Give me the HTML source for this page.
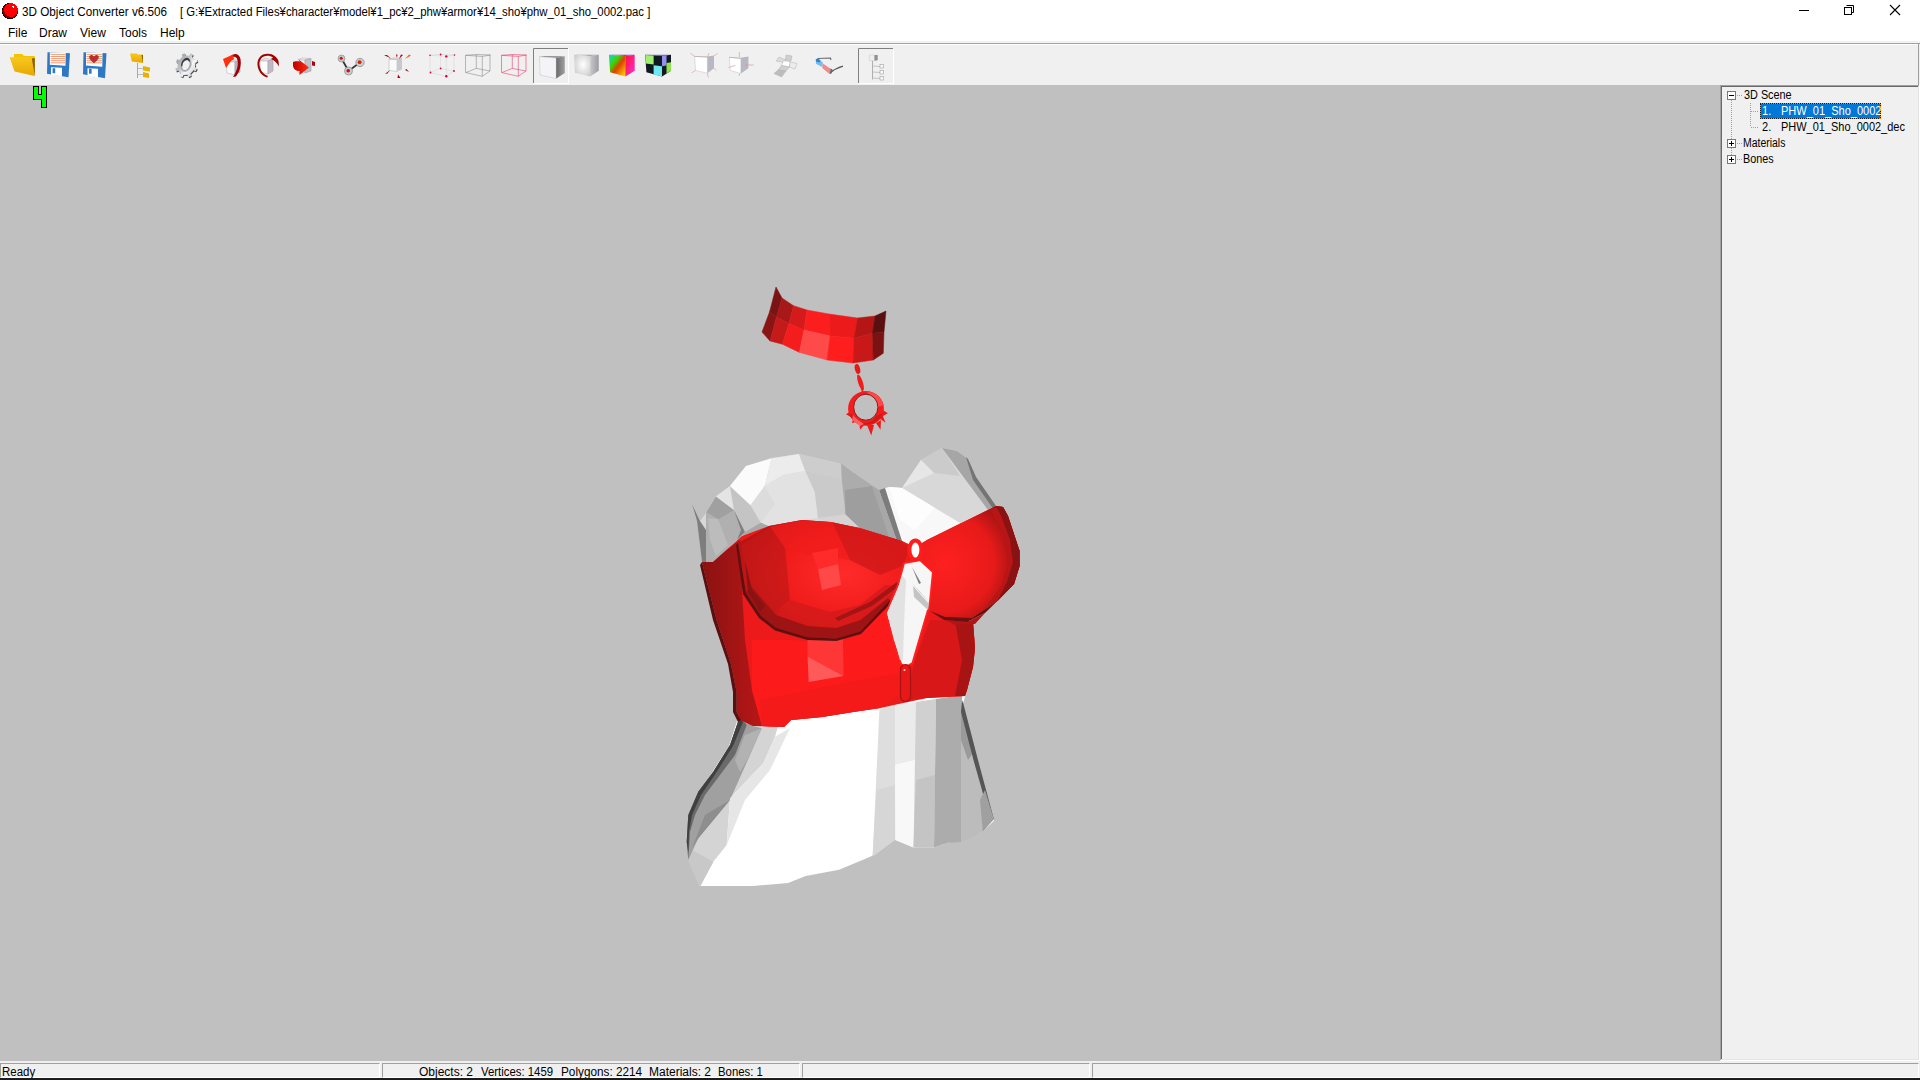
<!DOCTYPE html>
<html><head><meta charset="utf-8">
<style>
*{margin:0;padding:0;box-sizing:border-box}
html,body{width:1920px;height:1080px;overflow:hidden;background:#fff;font-family:"Liberation Sans",sans-serif;font-size:12px;color:#000}
.a{position:absolute}
.t{position:absolute;white-space:nowrap;line-height:1}
#title{left:0;top:0;width:1920px;height:43px;background:#fff}
#tb{left:0;top:43px;width:1920px;height:43px;background:#f0f0f0;border-top:1px solid #a0a0a0}
#vp{left:0;top:85px;width:1720px;height:976px;background:#c0c0c0}
#tree{left:1720px;top:85px;width:200px;height:976px;background:#f0f0f0}
#sb{left:0;top:1061px;width:1920px;height:19px;background:#f0f0f0}
.sp{position:absolute;top:2px;height:15px;border-top:1px solid #a0a0a0;border-left:1px solid #a0a0a0;border-right:1px solid #fff;border-bottom:1px solid #fff;background:#f0f0f0}
.tt{position:absolute;white-space:nowrap;font-size:12px;line-height:1;transform-origin:0 0}
</style></head>
<body>
<div id="title" class="a">
  <svg class="a" style="left:0;top:0" width="24" height="22" shape-rendering="crispEdges">
    <circle cx="10" cy="11" r="8.2" fill="#000"/>
    <circle cx="10" cy="11" r="7.6" fill="#880000"/>
    <circle cx="11" cy="10" r="6.8" fill="#ff0000"/>
    <path d="M12 6 H14 V8 H13 V7 H12 Z" fill="#fff"/>
  </svg>
  <div class="t" style="left:22px;top:6px;font-size:12px;transform:scaleX(0.975);transform-origin:0 0">3D Object Converter v6.506</div>
  <div class="t" style="left:180px;top:6px;font-size:12px;transform:scaleX(0.945);transform-origin:0 0">[ G:¥Extracted Files¥character¥model¥1_pc¥2_phw¥armor¥14_sho¥phw_01_sho_0002.pac ]</div>
  <svg class="a" style="left:1790px;top:0" width="130" height="22">
    <rect x="9" y="10" width="10" height="1" fill="#000"/>
    <rect x="54.5" y="7.5" width="7" height="7" fill="none" stroke="#000"/>
    <path d="M56.5 5.5 H63.5 V12.5 H61.5" fill="none" stroke="#000"/>
    <path d="M100 5 L110 15 M110 5 L100 15" stroke="#000" stroke-width="1.1"/>
  </svg>
  <div class="t" style="left:8px;top:27px">File</div>
  <div class="t" style="left:39px;top:27px">Draw</div>
  <div class="t" style="left:80px;top:27px">View</div>
  <div class="t" style="left:119px;top:27px">Tools</div>
  <div class="t" style="left:160px;top:27px">Help</div>
</div>
<div class="a" style="left:0;top:41px;width:1920px;height:1px;background:#f0f0f0"></div><div class="a" style="left:0;top:42px;width:1920px;height:1px;background:#f5f5f5"></div>
<div id="tb" class="a">
  <div class="a" style="left:0;top:0;width:1919px;height:1px;background:#fff"></div>
  <div class="a" style="left:1918px;top:0;width:1px;height:42px;background:#a0a0a0"></div>
  <div class="a" style="left:0;top:41px;width:1919px;height:1px;background:#696969"></div>
  <svg class="a" style="left:0;top:-43px" width="900" height="86">
 <defs>
  <linearGradient id="fy" x1="0" y1="0" x2="0" y2="1"><stop offset="0" stop-color="#f8c820"/><stop offset="1" stop-color="#e6a800"/></linearGradient>
  <linearGradient id="gry" x1="0" y1="0" x2="1" y2="1"><stop offset="0" stop-color="#e8e8e8"/><stop offset="0.5" stop-color="#a8a8a8"/><stop offset="1" stop-color="#707070"/></linearGradient>
  <linearGradient id="rar" x1="0" y1="0" x2="1" y2="0"><stop offset="0" stop-color="#c00000"/><stop offset="1" stop-color="#ff3010"/></linearGradient>
  <linearGradient id="sideg" x1="0" y1="0" x2="1" y2="0"><stop offset="0" stop-color="#6a6a6a"/><stop offset="1" stop-color="#a0a0a0"/></linearGradient>
  <linearGradient id="sideg2" x1="0" y1="0" x2="1" y2="0"><stop offset="0" stop-color="#c8c8cc"/><stop offset="1" stop-color="#9a9aa0"/></linearGradient>
  <radialGradient id="smf" cx="0.55" cy="0.45" r="0.7"><stop offset="0" stop-color="#ffffff"/><stop offset="1" stop-color="#c8c8c8"/></radialGradient>
  <linearGradient id="cc1" x1="0" y1="0" x2="1" y2="1"><stop offset="0" stop-color="#00e0d0"/><stop offset="0.35" stop-color="#40d000"/><stop offset="0.55" stop-color="#e04000"/><stop offset="1" stop-color="#ffe000"/></linearGradient>
  <linearGradient id="cc0" x1="0" y1="1" x2="0" y2="0"><stop offset="0" stop-color="#00ff20"/><stop offset="1" stop-color="#00e0c0" stop-opacity="0"/></linearGradient>
  <linearGradient id="cc2" x1="0" y1="0" x2="1" y2="1"><stop offset="0" stop-color="#ff1040"/><stop offset="1" stop-color="#ff30d0"/></linearGradient>
 </defs>
 <!-- folder -->
 <path d="M14 53 H22.5 L23.8 55 H34.8 V75 L31.8 57.6 H14 Z" fill="#f5c400"/>
 <path d="M9.6 56.2 H31.8 L34.8 75 L14.6 70.4 Z" fill="url(#fy)"/>
 <path d="M31.8 57.6 L34.8 75 V57 Z" fill="#8a6000"/>
 <!-- floppy 1 --><g transform="translate(0 -0.8)">
 <path d="M47.5 52 L70 53 L68.5 77 L47 73.5 Z" fill="#2f78c4"/>
 <path d="M49.8 52.3 H65.7 L65.5 65.5 L49.8 64.6 Z" fill="#fff"/>
 <g stroke="#f08050" stroke-width="0.8"><path d="M50.5 54.2 H65"/><path d="M50.5 56.3 H65"/><path d="M50.5 58.4 H65"/><path d="M50.5 60.5 H65"/><path d="M50.5 62.6 H65"/></g>
 <path d="M51 67 L62 67.6 L62 76 L51 74.8 Z" fill="#fff"/>
 <rect x="52.6" y="68" width="2.6" height="5" fill="#2f78c4"/>
 <!-- floppy 2 -->
 <path d="M83.5 52 L106.5 53 L105 78 L83 74 Z" fill="#2f78c4"/>
 <path d="M86 52.3 H102.5 L102.3 66.5 L86 65.3 Z" fill="#fff"/>
 <g stroke="#f08050" stroke-width="0.8"><path d="M86.5 54.2 H102"/><path d="M86.5 56.3 H102"/><path d="M86.5 58.4 H102"/><path d="M86.5 60.5 H102"/><path d="M86.5 62.6 H102"/></g>
 <path d="M94 63 C90 60 88.5 57.5 89.5 55.8 C90.5 54.2 93 54.5 94 56.3 C95 54.5 97.5 54.2 98.5 55.8 C99.5 57.5 98 60 94 63 Z" fill="#b83030"/>
 <path d="M87.5 68 L98 68.6 L98 77 L87.5 75.8 Z" fill="#fff"/>
 <rect x="89" y="68.5" width="2.6" height="5" fill="#2f78c4"/>
 </g><!-- tree icon -->
 <path d="M130 52.5 H137 L138 53.5 H143 V62 L131.8 60.5 Z" fill="url(#fy)"/>
 <path d="M141.5 54 L143 54 V62 Z" fill="#8a6000"/>
 <rect x="137" y="62" width="0.9" height="15" fill="#a0a0a0"/>
 <path d="M138 67.5 H143 M138 73.5 H143" stroke="#b0b0b0" stroke-width="0.8"/>
 <path d="M143 65 L150 66.5 L149.8 70.5 L143 69.5 Z" fill="#e8b000"/>
 <path d="M143 71 L149 72.5 L149 77 L143 76 Z" fill="#e8b000"/>
 <!-- gear -->
 <defs><linearGradient id="gch" x1="0" y1="0" x2="1" y2="0.3"><stop offset="0" stop-color="#98989c"/><stop offset="0.45" stop-color="#bfc3c7"/><stop offset="0.75" stop-color="#f4f8fa"/><stop offset="1" stop-color="#d8dcdf"/></linearGradient></defs>
 <g transform="translate(186.5 64.2) rotate(25) scale(0.9 1.04)">
  <path d="M8.87 -3.67 L9.46 -1.65 L12.10 -1.53 L12.10 1.53 L9.46 1.65 L8.87 3.67 L7.85 5.52 L9.64 7.48 L7.48 9.64 L5.52 7.85 L3.67 8.87 L1.65 9.46 L1.53 12.10 L-1.53 12.10 L-1.65 9.46 L-3.67 8.87 L-5.52 7.85 L-7.48 9.64 L-9.64 7.48 L-7.85 5.52 L-8.87 3.67 L-9.46 1.65 L-12.10 1.53 L-12.10 -1.53 L-9.46 -1.65 L-8.87 -3.67 L-7.85 -5.52 L-9.64 -7.48 L-7.48 -9.64 L-5.52 -7.85 L-3.67 -8.87 L-1.65 -9.46 L-1.53 -12.10 L1.53 -12.10 L1.65 -9.46 L3.67 -8.87 L5.52 -7.85 L7.48 -9.64 L9.64 -7.48 L7.85 -5.52 Z" fill="#4a4a4a" transform="translate(1.2 0.6)"/>
  <path d="M8.87 -3.67 L9.46 -1.65 L12.10 -1.53 L12.10 1.53 L9.46 1.65 L8.87 3.67 L7.85 5.52 L9.64 7.48 L7.48 9.64 L5.52 7.85 L3.67 8.87 L1.65 9.46 L1.53 12.10 L-1.53 12.10 L-1.65 9.46 L-3.67 8.87 L-5.52 7.85 L-7.48 9.64 L-9.64 7.48 L-7.85 5.52 L-8.87 3.67 L-9.46 1.65 L-12.10 1.53 L-12.10 -1.53 L-9.46 -1.65 L-8.87 -3.67 L-7.85 -5.52 L-9.64 -7.48 L-7.48 -9.64 L-5.52 -7.85 L-3.67 -8.87 L-1.65 -9.46 L-1.53 -12.10 L1.53 -12.10 L1.65 -9.46 L3.67 -8.87 L5.52 -7.85 L7.48 -9.64 L9.64 -7.48 L7.85 -5.52 Z" fill="url(#gch)"/>
  <ellipse cx="-0.8" cy="0" rx="6.2" ry="7" fill="#b8b8bc"/><ellipse cx="-0.6" cy="0.2" rx="4.3" ry="5.4" fill="#f0f0f0" stroke="#8c8c8c" stroke-width="0.7"/>
  <path d="M-4.9 3 A4.3 5.4 0 0 1 1.5 -5.3 L1.2 -3.6 A3.2 4.2 0 0 0 -3.6 2.6 Z" fill="#3a3a3a"/>
 </g>
 <!-- rotate 1 -->
 <path d="M226 61 L231 58.5 L240 59.5 L235 61 Z" fill="#e8e0e4" stroke="#b0a8b0" stroke-width="0.6"/>
 <path d="M226 61 L235 61 V74 L227 72 Z" fill="#fafafa" stroke="#b8b8b8" stroke-width="0.6"/>
 <path d="M235 61 L240 59.5 V71 L235 74 Z" fill="#b8b4c0" stroke="#a0a0a8" stroke-width="0.6"/>
 <path d="M231 55 C234 52 239 52 240.5 58 C241.5 64 240 70 236 75.5 L233 76 C237 70 238.5 64 237.5 59 C236.5 55 233 55 231 57 Z" fill="#a00000"/>
 <path d="M223 58 L233 53.5 L234 58 L231 60 L226 67 Z" fill="#ff3010"/>
 <!-- rotate 2 -->
 <path d="M260 60 L265 57.5 L273 58.5 L268 60 Z" fill="#f0e4e8" stroke="#c0b0b8" stroke-width="0.6"/>
 <path d="M260 60 L268 60 V73 L260.5 71 Z" fill="#fcfcfc" stroke="#b8b8b8" stroke-width="0.6"/>
 <path d="M268 60 L273 58.5 V70 L268 73 Z" fill="#c0b8c4" stroke="#a8a0a8" stroke-width="0.6"/>
 <path d="M266 53 C260 53 257 59 257.5 64 C258 70 262 75 267 76.5 L268 75 C263 73 260 69 259.5 64 C259 59 262 55 266 55 Z" fill="#a00000"/>
 <path d="M266 53 C272 52 277 56 278.5 60 L279 65.5 C277 62 274 59 271 58 L273 56.5 C271 55 268 54.5 266 55 Z" fill="#a00000"/>
 <!-- move -->
 <path d="M298 58.5 L305 59 V72 L298 71.5 Z" fill="#fafafa" stroke="#b8b8b8" stroke-width="0.6"/>
 <path d="M298 58.5 L302 57 L311 57.5 L305 59 Z" fill="#f0f0f0" stroke="#b8b8b8" stroke-width="0.6"/>
 <path d="M305 59 L311 57.5 V70 L305 72 Z" fill="#c0c0c8" stroke="#a0a0a8" stroke-width="0.6"/>
 <path d="M312 60 L315 61 V65 L312 64.5 Z" fill="#b00010"/>
 <path d="M293 61 C294 60 298 60 299.5 60.5 L299 58.7 L309 66.5 L299.5 74 L299.5 70 C296 70 293.5 68 293 65 Z" fill="url(#rar)"/>
 <!-- vertices -->
 <path d="M341.5 57.5 L348.5 70 L360 61.5" stroke="#383838" stroke-width="1.8" fill="none"/>
 <circle cx="341.5" cy="57.5" r="3.4" fill="#c8ccd0" stroke="#8a8a8a" stroke-width="0.7"/><circle cx="341.2" cy="57.2" r="1.5" fill="#d01000"/>
 <circle cx="348.5" cy="70" r="4" fill="#c8ccd0" stroke="#8a8a8a" stroke-width="0.7"/><circle cx="348.2" cy="69.8" r="1.8" fill="#d01000"/>
 <circle cx="360" cy="61.5" r="4.2" fill="#c8ccd0" stroke="#8a8a8a" stroke-width="0.7"/><circle cx="359.6" cy="61.2" r="1.9" fill="#e02000"/>
 <!-- scale cube -->
 <path d="M389 58 L397 58.5 V70.5 L389 69.5 Z" fill="#fafafa" stroke="#b8b8b8" stroke-width="0.6"/>
 <path d="M389 58 L394 57 L402 57.5 L397 58.5 Z" fill="#e8e8e8" stroke="#b8b8b8" stroke-width="0.6"/>
 <path d="M397 58.5 L402 57.5 V68.5 L397 70.5 Z" fill="#c8c8d0"/>
 <g fill="#b00010"><path d="M384 54 L387 54 L391 57.5 Z"/><path d="M396 53.5 L397.5 53.5 L397 57 Z"/><path d="M401 53.5 L403 54 L399 58 Z"/><path d="M385 73 L390 69 L387.5 72.5 Z"/><path d="M406.5 68 L409 71 L405 69 Z"/><path d="M398 73.5 L400.5 77 L397.5 77 Z"/></g>
 <path d="M409 53.5 L411 54.5 L405 58 Z" fill="#ff6010"/>
 <!-- points cube -->
 <g stroke="#d6d6d6" stroke-width="0.6" fill="none"><path d="M430 54.3 L440.6 53.5 L454.5 54 L446.3 55.4 Z M430 54.3 V71.5 L446.3 75.3 L454 70 V54 M446.3 55.4 V75.3 M440.6 53.5 V67.4 L430 71.5 M440.6 67.4 L454 70"/></g>
 <g fill="#d80040"><circle cx="430" cy="54.3" r="0.8"/><circle cx="440.6" cy="53.5" r="0.9"/><circle cx="454.5" cy="54" r="0.8"/><circle cx="446.3" cy="55.4" r="1.2"/><circle cx="440.6" cy="67.4" r="0.9"/><circle cx="430.5" cy="71.5" r="0.9"/><circle cx="454" cy="70" r="0.9"/><circle cx="446.3" cy="75.3" r="1.2"/></g>
 <!-- wire gray -->
 <g stroke="#8c8c8c" stroke-width="0.6" fill="none"><path d="M465.5 54.3 L476.3 53.5 L490.5 54 L482.3 55.4 Z M465.5 54.3 V71.5 L482.3 75.3 L490 70 V54 M482.3 55.4 V75.3 M476.3 53.5 V67.4 L466 71.5 M476.3 67.4 L490 70"/></g>
 <!-- wire red -->
 <g stroke="#e8406a" stroke-width="0.6" fill="none"><path d="M501.5 54.3 L512.3 53.5 L526.5 54 L518.3 55.4 Z M501.5 54.3 V71.5 L518.3 75.3 L526 70 V54 M518.3 55.4 V75.3 M512.3 53.5 V67.4 L502 71.5 M512.3 67.4 L526 70"/></g>
 <!-- pressed 1 -->
 <path d="M533.5 82 V47.5 H568" stroke="#808080" stroke-width="1" fill="none"/>
 <path d="M568.5 47.5 V82.5 H533.5" stroke="#fff" stroke-width="1" fill="none"/>
 <path d="M539.4 55.7 L545 54.9 L564.8 55.3 L556.2 57 Z" fill="#909090"/>
 <path d="M539.4 55.7 L556.2 57 V77.6 L540.2 74.1 Z" fill="#f4f4f8" stroke="#c0c0c0" stroke-width="0.5"/>
 <path d="M556.2 57 L564.8 55.3 V72.1 L556.2 77.6 Z" fill="url(#sideg)"/>
 <!-- smooth cube -->
 <path d="M574.1 53.8 L598.75 53.8 L590.2 54.9 Z" fill="#a0a0a0"/>
 <path d="M574.1 53.8 L590.2 54.9 V75.6 L574.9 71.7 Z" fill="url(#smf)"/>
 <path d="M590.2 54.9 L598.75 53.8 V69.8 L590.2 75.6 Z" fill="url(#sideg2)"/>
 <!-- color cube -->
 <path d="M608.9 53.8 L634.7 53.8 L625.3 54.9 Z" fill="#8040c0"/>
 <path d="M608.9 53.8 L625.3 54.9 V75.6 L610.1 71.3 Z" fill="url(#cc1)"/>
 <path d="M625.3 54.9 L634.7 53.8 V69.8 L625.3 75.6 Z" fill="url(#cc2)"/>
 <!-- checker cube -->
 <path d="M645.2 53.8 L671 53.8 L662 54.9 Z" fill="#8060c0"/>
 <path d="M645.2 53.8 L662 54.9 V75.6 L646.4 71.3 Z" fill="#101820"/>
 <path d="M645.4 54 L653.6 54.4 V63.5 L645.8 62.5 Z" fill="#a0f070"/>
 <path d="M653.6 64.3 L662 65.2 V75.6 L653.6 73.5 Z" fill="#70e8f0"/>
 <path d="M662 54.9 L671 53.8 V69.8 L662 75.6 Z" fill="#101820"/>
 <path d="M662 54.9 L666.5 54.4 V64.5 L662 65.2 Z" fill="#9090f0"/>
 <path d="M666.5 62 L671 61.3 V69.8 L666.5 72.5 Z" fill="#90e050"/>
 <!-- vertex normals cube -->
 <path d="M694.6 55.4 L707.4 56 V72.25 L695.6 69.4 Z" fill="#fff" stroke="#c0c0c0" stroke-width="0.5"/>
 <path d="M707.4 56 L714 55 V67.25 L707.4 72.25 Z" fill="#b8b8c4"/>
 <path d="M694.6 55.4 L707.4 56 L714 55" stroke="#b0b0b0" stroke-width="0.8" fill="none"/>
 <g stroke="#e09090" stroke-width="0.6"><path d="M694.6 55.4 L690.4 52.3 M714 55 L717.6 52.3 M695.6 69.4 L691.5 71.9 M707.4 72.25 L708.4 76.6 M714 67.25 L716.5 69.6 M707.4 56 L709 52"/></g>
 <!-- face normals cube -->
 <path d="M729.3 56.3 L740.9 57.25 V72.6 L730.25 69.4 Z" fill="#fff" stroke="#c0c0c0" stroke-width="0.5"/>
 <path d="M740.9 57.25 L748.4 56 V67.25 L740.9 72.6 Z" fill="#b8b8c4"/>
 <path d="M729.3 56.3 L740.9 57.25 L748.4 56" stroke="#b0b0b0" stroke-width="0.8" fill="none"/>
 <g stroke="#d09090" stroke-width="0.6"><path d="M739.4 51 V56 M745.5 64 H753.6 M728.6 66.5 L735.4 64.3 M739.4 72.5 V75"/></g>
 <!-- unwrap -->
 <g stroke="#b0b0b0" stroke-width="0.5">
 <path d="M776 60 L779 56 L786 59 L783.4 61.5 Z" fill="#dcdcdc"/>
 <path d="M786 54 L792 55 L791 60 L785.5 59 Z" fill="#cfcfcf"/>
 <path d="M783.4 59.75 L790.25 60.5 L789.5 66 L781.5 64.5 Z" fill="#fff"/>
 <path d="M790 61 L797 62.5 L795 68 L789.5 66 Z" fill="#ececec"/>
 <path d="M781.5 64.5 L789.5 66 L786 70 L778 69 Z" fill="#d0d0d0"/>
 <path d="M778 69 L786 70 L781.5 76 L774 72.5 Z" fill="#bcbcbc"/>
 </g>
 <!-- glasses -->
 <path d="M817.5 57.5 L830.5 57 L831 59" stroke="#6a6a6a" stroke-width="1.1" fill="none"/>
 <path d="M830 72 C834 68.5 838.5 66.5 843 65.2" stroke="#5a5a5a" stroke-width="1.2" fill="none"/>
 <path d="M815.8 58.2 L818 57.4 L822.8 61.6 L822.2 66 L816 62.8 Z" fill="#70bcf4"/>
 <path d="M815.8 58.2 L818 57.4 L820.5 59.6 L819.5 61.6 L816 60.6 Z" fill="#2a86d6"/>
 <path d="M822.8 62.6 L831 68 L829.5 73 L822.2 67 Z" fill="#ec8c8c"/>
 <path d="M830.8 67.6 L832.5 68.4 L831.5 72.6 L829.5 73 Z" fill="#6a6a6a"/>
 <!-- pressed 2 -->
 <path d="M858.5 82 V47.5 H893" stroke="#808080" stroke-width="1" fill="none"/>
 <path d="M893.5 47.5 V82.5 H858.5" stroke="#fff" stroke-width="1" fill="none"/>
 <path d="M869.3 54 H874.5 V59.8 H869.3 Z" fill="#eeeeee" stroke="#c8c8c8" stroke-width="0.5"/>
 <path d="M874.5 54 H877.7 V59.3 L874.5 59.8 Z" fill="#909090"/>
 <rect x="872" y="60" width="0.9" height="18.5" fill="#a8a8a8"/>
 <path d="M873 65 L880 65.5 M873 71 L880 71.5 M873 77 L880 77.5" stroke="#b0b0b0" stroke-width="0.7"/>
 <g fill="#f8f8f8" stroke="#a0a0a0" stroke-width="0.6"><rect x="880" y="63.5" width="3.5" height="3.5"/><rect x="880" y="69.5" width="3.5" height="3.5"/><rect x="880" y="75.5" width="3.5" height="3.5"/></g>
</svg>

</div>
<div id="vp" class="a">
  <svg class="a" style="left:32px;top:0" width="16" height="24">
    <path d="M1 1 H7 V9 H9 V1 H15 V23 H9 V15 H1 Z" fill="#000"/>
    <path d="M2 2 H6 V10 H10 V2 H14 V22 H10 V14 H2 Z" fill="#00ff00"/>
  </svg>
  <svg class="a" style="left:0;top:-85px" width="1720" height="1061" viewBox="0 0 1720 1061">
 <defs>
  <linearGradient id="skL" x1="0" y1="0" x2="1" y2="0"><stop offset="0" stop-color="#5a5a5a"/><stop offset="1" stop-color="#8a8a8a"/></linearGradient>
  <linearGradient id="redL" x1="0" y1="0" x2="1" y2="0"><stop offset="0" stop-color="#8a1212"/><stop offset="1" stop-color="#b81616"/></linearGradient>
  <radialGradient id="cupL" cx="0.6" cy="0.45" r="0.6"><stop offset="0" stop-color="#ff2a2a"/><stop offset="0.6" stop-color="#f01c1c"/><stop offset="1" stop-color="#b81414"/></radialGradient>
  <radialGradient id="cupR" cx="0.35" cy="0.5" r="0.65"><stop offset="0" stop-color="#ff2020"/><stop offset="0.65" stop-color="#e81a1a"/><stop offset="1" stop-color="#9a1212"/></radialGradient>
  <linearGradient id="chk" x1="0" y1="0" x2="1" y2="0"><stop offset="0" stop-color="#801010"/><stop offset="0.2" stop-color="#c01616"/><stop offset="0.4" stop-color="#ff1c1c"/><stop offset="0.7" stop-color="#f01a1a"/><stop offset="0.78" stop-color="#b01414"/><stop offset="1" stop-color="#6a1010"/></linearGradient>
 </defs>

 <!-- ===== SKIRT ===== -->
 <path d="M740 712 L729 746 L701.5 789 L688.5 815 L686.7 841 L688.5 859 L700.6 886 L753 886 L788.1 882.9 L805.7 875.9 L839.1 869.7 L870.8 856.5 L893.9 839.6 L913.5 847.5 L934 847.5 L948.2 842.8 L982.8 831.7 L993.9 820.7 L993.9 819.1 L962.4 705.7 L967 690 L880 700 Z" fill="#ffffff"/>
 <!-- left dark strip -->
 <path d="M740 716 L730 745 L713.3 771.7 L698.3 791.7 L688.3 815 L686.7 841.7 L688.3 860 L700 886.7 L713.3 861.7 L726.7 845 L730 798.3 L763.3 763.3 L775 736.7 L778 726 L753 726 Z" fill="#d4d4d4"/>
 <path d="M700 886.7 L688.3 860 L692 850 L713.3 861.7 Z" fill="#c8c8c8"/>
 <path d="M740 716 L730 745 L713.3 771.7 L698.3 791.7 L688.3 815 L686.7 841.7 L688.3 860 L698.3 838.3 L730 800 L750 755 L761.7 728.3 L753 726 Z" fill="#a0a0a0"/>
 <path d="M705 815 L730 800 L698.3 838.3 L692 848 Z" fill="#8e8e8e"/>
 <path d="M745 735 L761.7 728.3 L750 755 L740 772 L735 760 Z" fill="#b2b2b2"/>
 <path d="M740 716 L730 745 L713.3 771.7 L698.3 791.7 L688.3 815 L686.7 841.7 L688.3 860 L690 831.7 L695 815 L705 795 L735 755 L746.7 725 Z" fill="#6a6a6a"/>
 <path d="M740 716 L730 745 L713.3 771.7 L698.3 791.7 L688.3 815 L686.7 841.7 L688.3 852 L689 831.7 L692 815 L701 795 L716 773 L733 746 L743 722 Z" fill="#404040"/>
 <path d="M730 798.3 L763.3 763.3 L775 736.7 L790 728 L770 770 L745 800 L726.7 845 Z" fill="#e6e6e6"/>
 <!-- right strips -->
 <path d="M879.6 706 L895 705 L895.4 839.6 L872.6 856.5 Z" fill="#dedede"/>
 <path d="M876.5 790 L895.4 785 L895.4 839.6 L872.6 856.5 Z" fill="#d6d6d6"/>
 <path d="M895 705 L916 702 L916 760 L895 765 Z" fill="#ebebeb"/>
 <path d="M895 765 L916 760 L916 847.5 L913.5 847.5 L895.4 839.6 Z" fill="#f8f8f8"/>
 <path d="M916 702 L936 699 L934 847.5 L913.5 847.5 Z" fill="#d0d0d0"/>
 <path d="M916 780 L935 775 L934 847.5 L913.5 847.5 Z" fill="#c4c4c4"/>
 <path d="M936 699 L962 695 L961 842 L948.2 842.8 L934 847.5 Z" fill="#acacac"/>
 <path d="M961 700 L962.4 705.7 L993.9 819.1 L982.8 831.7 L961 842 Z" fill="#bcbcbc"/>
 <path d="M961 700 L975 750 L968 760 L961 740 Z" fill="#9a9a9a"/>
 <path d="M962.4 700 L978 760 L993.9 819.1 L990 822 L982 790 L974 762 L961 712 Z" fill="#555555"/>
 <path d="M985 790 L993.9 819.1 L982.8 831.7 L980 800 Z" fill="#a0a0a0"/>
 <!-- ===== UPPER WHITE / SHOULDERS ===== -->
 <!-- left shoulder base -->
 <path d="M692 504 L700 521 L706 513 L716 496 L730 486 L746 466 L771 458 L799 454 L841 464 L850 470 L879 490 L902 541 L860 528 L830 522 L802 520 L769 526 L742 536 L726.5 550 L713 562 L702 562 L697 521 Z" fill="#d8d8d8"/>
 <path d="M706 513 L716 496.5 L734 510 L745 532 L737 540 L726.5 550 L713.6 562 L705.7 562 L706 525 Z" fill="#b0b0b0"/>
 <path d="M708 518 L718 519 L728 545 L716 556 L710 540 Z" fill="#bcbcbc"/>
 <path d="M706.5 512.3 L716 496.5 L734 510 L718.3 519.3 Z" fill="#a0a0a0"/>
 <path d="M716 496.5 L730 486.3 L734 510 Z" fill="#e4e4e4"/>
 <path d="M730 486.3 L750.6 505.2 L760.8 522.5 L745 532 L734 510 Z" fill="#c4c4c4"/>
 <path d="M734 510 L745 532 L737 540 L741 530 Z" fill="#808080"/>
 <path d="M745 532 L760.8 522.5 L769 526 L742 536 Z" fill="#a8a8a8"/>
 <path d="M692 504 L697 521 L702 562 L706 562 L706 530 L700 521 Z" fill="#7e7e7e"/>
 <path d="M730 486 L746 466 L771.5 458.4 L764.7 486 L750.6 505.2 Z" fill="#fbfbfb"/>
 <path d="M771.5 458.4 L799 454 L805.4 471 L783.3 475 L764.7 486 Z" fill="#ececec"/>
 <path d="M764.7 486 L775 504.4 L760.8 522.5 L750.6 505.2 Z" fill="#dcdcdc"/>
 <path d="M764.7 486 L783.3 475 L805.4 471 L814.8 492 L818 518 L802 520 L769 526 L760.8 522.5 L775 504.4 Z" fill="#e2e2e2"/>
 <path d="M799 454 L841 463.5 L841.6 478 L805.4 471 Z" fill="#cdcdcd"/>
 <path d="M805.4 471 L841.6 478 L845.5 514.3 L830 522 L818 518 L814.8 492 Z" fill="#cacaca"/>
 <path d="M818 518 L845.5 514.3 L860 528 L830 522 Z" fill="#d4d4d4"/>
 <path d="M841 463.5 L850 470 L879 490 L897 541 L880 536 L860 528 L845.5 514.3 L841.6 478 Z" fill="#acacac"/>
 <path d="M845 490 L872 486 L890 539 L880 536 L860 528 L845.5 514.3 Z" fill="#9e9e9e"/>

 <!-- right shoulder base -->
 <path d="M879 490 L889 487 L902 488 L921 460 L942 448 L957 451 L968 459 L976 477 L996 506 L1003 507 L927 540 L915 547 L902 541 Z" fill="#d8d8d8"/>
 <path d="M921 460 L942 448 L960 476 L934 473 Z" fill="#cbcbcb"/>
 <path d="M921 460 L934 473 L902 488 Z" fill="#e6e6e6"/>
 <path d="M942 448 L957 451 L968 459 L976 477 L996 506 L988 510 Z" fill="#a6a6a6"/>
 <path d="M966 457 L968 459 L976 477 L996 506 L1003 507 L994 510 L973 480 Z" fill="#747474"/>
 <path d="M879 490 L889 487 L902 488 L960 523 L927 540 L915 547 L902 541 Z" fill="#f8f8f8"/>
 <path d="M889 487 L902 488 L935 508 L915 530 L900 520 Z" fill="#fdfdfd"/>
 <path d="M879 490 L885 488 L902 541 L897 541 Z" fill="#7c7c7c"/>
 <path d="M872 486 L879 490 L897 541 L890 539 Z" fill="#a8a8a8"/>

 <!-- ===== RED BAND + CUPS ===== -->
 <path d="M702 562 L713 562 L726.5 550 L742 536 L769 526 L802 520 L830 522 L860 528 L902 541 L915 547 L927 540 L996 506 L1003 507 L1008 516 L1019.6 551 L1019.6 566 L1014 584 L997.4 601 L971.5 618 L967 621 L973 622 L975 648 L973 667 L967 690 L965 696 L927 698 L880 708 L853 712 L822 717 L791 720 L784 727 L753 726 L741 720 L736.7 712 L736.7 692 L731 664 L716.7 620 Z" fill="#ec1a1a"/>
 <!-- band left dark side -->
 <path d="M702 562 L713 562 L726.5 550 L740 540 L742 590 L745 640 L752 690 L762 726 L753 726 L741 720 L736.7 712 L736.7 692 L731 664 L716.7 620 Z" fill="url(#redL)"/>
 <path d="M702 562 L716.7 620 L731 664 L736.7 692 L736.7 712 L741 720 L738 722 L733 712 L733 692 L728 664 L713 620 L700 565 Z" fill="#5a1010"/>
 <!-- band lower middle -->
 <path d="M752 640 L790 640 L823 642 L860 632 L890 600 L900 640 L905 690 L880 708 L853 712 L822 717 L791 720 L784 727 L762 726 L752 690 Z" fill="#fc1a1a"/>
 <path d="M760 700 L810 690 L860 680 L905 672 L905 690 L880 708 L853 712 L822 717 L791 720 L784 727 L762 726 Z" fill="#f41a1a"/>
 <path d="M807.5 638 L843 639 L843.6 675.9 L807.5 656.6 Z" fill="#ff3636"/>
 <path d="M807.5 656.6 L843.6 675.9 L808.7 681.9 Z" fill="#ff5a5a"/>
 <!-- band right side -->
 <path d="M930 620 L967 621 L973 622 L975 648 L973 667 L967 690 L965 696 L927 698 L905 700 L915 660 Z" fill="#d81818"/>
 <path d="M955 621 L967 621 L973 622 L975 648 L973 667 L967 690 L965 696 L955 696 L962 660 Z" fill="#a81414"/>
 <!-- left cup -->
 <path d="M738 543 L769 526 L802 520 L830 522 L860 528 L902 541 L915 550 L905 572 L890 600 L860.5 631.3 L836.4 638.5 L807.5 637.3 L776 627.7 L761 616 L746 593 Z" fill="url(#cupL)"/>
 <path d="M832 522 L867.5 530.7 L898.9 540.3 L909 548 L903.7 565.6 L880 575 L850 560 Z" fill="#d01818" opacity="0.8"/>
 <path d="M770 527 L801 520.4 L832 522 L850 560 L812 555 L785 548 Z" fill="#f01c1c" opacity="0.7"/>
 <path d="M741 545 L770 527 L785 548 L790 600 L770 616 L751 599 Z" fill="#c41818" opacity="0.75"/>
 <path d="M790 600 L830 612 L860 605 L885 585 L900 586 L885.6 609 L861.5 627 L831.4 632 L801 628 L775 617 Z" fill="#d41a1a" opacity="0.8"/>
 <path d="M818 569 L838 564 L841 585 L822 590 Z" fill="#ff4848"/>
 <path d="M812 553 L838 548 L838 564 L818 569 Z" fill="#ff2a2a"/>
 <path d="M835 618 L870 602 L897 582 L899 586 L872 606 L838 621 Z" fill="#a41414"/>
 <path d="M750 585 L776 615 L807.5 626 L836.4 628 L860.5 620 L888 598 L890 600 L860.5 631.3 L836.4 638.5 L807.5 637.3 L776 627.7 L761 616 L746 593 Z" fill="#9e1414"/>
 <path d="M738 543 L746 593 L761 616 L776 627.7 L807.5 637.3 L836.4 638.5 L860.5 631.3 L890 600 L892 602 L861 634 L836.4 641 L807.5 640 L775 630.5 L759 618 L743 594 L736 545 Z" fill="#5e1010"/>
 <path d="M745 560 L752 590 L765 606 L760 612 L748 592 Z" fill="#8a1212"/>
 <!-- right cup -->
 <path d="M905 572 L915 550 L927 540 L996 506 L1003 507 L1008 516 L1019.6 551 L1019.6 566 L1014 584 L997.4 601 L971.5 618 L967 621 L940 617 L918 605 Z" fill="url(#cupR)"/>
 <path d="M990 509 L1003 507 L1008 516 L1019.6 551 L1019.6 566 L1014 584 L997.4 601 L985 608 L1002 585 L1008 560 L1000 528 Z" fill="#b81616"/>
 <path d="M996 506 L1003 507 L1008 516 L1019.6 551 L1019.6 566 L1014 584 L997.4 601 L1007 582 L1013 562 L1010 540 L1002 518 Z" fill="#8a1212"/>
 <path d="M930 611 L945 617 L971.5 618 L997.4 601 L985 613 L967 622 L944 620 Z" fill="#6a1010"/>
 <path d="M945 620 L967 622 L985 613 L975 624 L955 625 Z" fill="#b01414"/>

 <!-- keyhole -->
 <path d="M915 561 L904 563 L898 585 L886 613 L893 640 L901 664 L906 667 L912.5 663 L928 610 L930 602 L933 572 L920 560 Z" fill="#f6f6f6" stroke="#ff2020" stroke-width="2"/>
 <path d="M902 575 L906 580 L904 625 L903 660 L900 660 L887 613 L898 588 Z" fill="#e2e2e2"/>
 <path d="M911.7 583.3 L930 603.3 L920 591.7 Z" fill="#a8a8a8"/>
 <path d="M912 567 L921 583 L919 584 Z" fill="#808080"/>
 <path d="M913 586 L929 604 L928 610 L914 597 Z" fill="#c4c4c4"/>
 <ellipse cx="915.4" cy="550" rx="6" ry="9.5" fill="#ffffff" stroke="#ff1c1c" stroke-width="4"/>
 <rect x="900.5" y="664.5" width="10" height="37" rx="5" fill="#e81818" stroke="#a81212" stroke-width="1.2"/>
 <circle cx="904.5" cy="670" r="1" fill="#ffd0d0"/>

 <!-- ===== CHOKER ===== -->
 <path d="M776 287 L782 298 L776.5 317 L769.5 312 Z" fill="#7a1414" stroke="#7a1414" stroke-width="0.5"/>
 <path d="M769.5 312 L776.5 317 L770 341 L762 332 Z" fill="#8a1414" stroke="#8a1414" stroke-width="0.5"/>
 <path d="M782 298 L793.5 305.7 L789 323.5 L776.5 317 Z" fill="#a81818" stroke="#a81818" stroke-width="0.5"/>
 <path d="M776.5 317 L789 323.5 L782.4 344.2 L770 341 Z" fill="#c41a1a" stroke="#c41a1a" stroke-width="0.5"/>
 <path d="M793.5 305.7 L807 310 L804 330 L789 323.5 Z" fill="#d41a1a" stroke="#d41a1a" stroke-width="0.5"/>
 <path d="M789 323.5 L804 330 L799.4 352.4 L782.4 344.2 Z" fill="#f41c1c" stroke="#f41c1c" stroke-width="0.5"/>
 <path d="M807 310 L829 314 L830 336 L804 330 Z" fill="#fc1e1e" stroke="#fc1e1e" stroke-width="0.5"/>
 <path d="M804 330 L830 336 L827 360 L799.4 352.4 Z" fill="#ff4a4a" stroke="#ff4a4a" stroke-width="0.5"/>
 <path d="M829 314 L857.5 318 L854 338.3 L830 336 Z" fill="#ec1a1a" stroke="#ec1a1a" stroke-width="0.5"/>
 <path d="M830 336 L854 338.3 L853 363 L827 360 Z" fill="#ff1e1e" stroke="#ff1e1e" stroke-width="0.5"/>
 <path d="M857.5 318 L875 316 L872.5 333.3 L854 338.3 Z" fill="#b41616" stroke="#b41616" stroke-width="0.5"/>
 <path d="M854 338.3 L872.5 333.3 L873.3 360 L853 363 Z" fill="#c81818" stroke="#c81818" stroke-width="0.5"/>
 <path d="M875 316 L886 311 L884 332 L872.5 333.3 Z" fill="#5a1010" stroke="#5a1010" stroke-width="0.5"/>
 <path d="M872.5 333.3 L884 332 L883.3 353.3 L873.3 360 Z" fill="#7a1212" stroke="#7a1212" stroke-width="0.5"/>

 <!-- pendant -->
 <ellipse cx="857.5" cy="369" rx="2.6" ry="5" fill="#e81818" transform="rotate(-15 857.5 369)"/>
 <ellipse cx="860.5" cy="382.5" rx="2.3" ry="8.5" fill="#f01c1c" transform="rotate(-18 860.5 382.5)"/>
 <path d="M861 388 L864 392 L862 393 Z" fill="#e01818"/>
 <g fill="#ee1a1a">
  <path d="M846 414.3 L851 411 L851.5 417.5 Z"/>
  <path d="M852 423.2 L853.5 417 L858 421 Z"/>
  <path d="M860.1 429.8 L859 421.5 L865 424 Z"/>
  <path d="M871.3 435.4 L867 425 L874 425 Z"/>
  <path d="M880.5 429.8 L876 423 L881 420 Z"/>
  <path d="M885.6 422.7 L879 418 L882 414 Z"/>
  <path d="M887.9 413.3 L881 409 L882 416.5 Z"/>
 </g>
 <ellipse cx="866" cy="408.4" rx="17.9" ry="17.3" fill="#f41c1c"/>
 <path d="M849 413 A17.9 17.3 0 0 0 883 413 L876 416 A12 13 0 0 1 855 416 Z" fill="#d41818"/>
 <path d="M866 391.5 A17.9 17.3 0 0 1 883.5 405 L878 407 A12 13 0 0 0 870 395 Z" fill="#ff4848"/>
 <path d="M853 415 L858 420 L864 424 L860 426 L852 420 Z" fill="#ff6060"/>
 <ellipse cx="865.8" cy="407.2" rx="12.1" ry="13" fill="#c0c0c0" stroke="#801010" stroke-width="0.9"/>
 </svg>

</div>
<div id="tree" class="a">
  
  <div class="a" style="left:0;top:0;width:200px;height:1px;background:#a0a0a0"></div>
  <div class="a" style="left:0;top:0;width:1px;height:975px;background:#a0a0a0"></div>
  <div class="a" style="left:1px;top:1px;width:198px;height:1px;background:#696969"></div>
  <div class="a" style="left:1px;top:1px;width:1px;height:973px;background:#696969"></div>
  <div class="a" style="left:198px;top:1px;width:1px;height:974px;background:#e3e3e3"></div>
  <div class="a" style="left:1px;top:974px;width:198px;height:1px;background:#e3e3e3"></div>
  <div class="a" style="left:199px;top:0;width:1px;height:976px;background:#fff"></div>
  <div class="a" style="left:0;top:975px;width:200px;height:1px;background:#fff"></div>
  <svg class="a" style="left:0;top:0" width="200" height="90">
    <g fill="none" stroke="#a0a0a0" stroke-width="1" stroke-dasharray="1 1">
      <path d="M11.5 15 V70"/>
      <path d="M17 10.5 H22"/>
      <path d="M17 58.5 H22"/>
      <path d="M17 74.5 H22"/>
      <path d="M30.5 18 V42"/>
      <path d="M31 26.5 H39"/>
      <path d="M31 42.5 H39"/>
    </g>
    <g fill="#fff" stroke="#787878">
      <rect x="7.5" y="6.5" width="8" height="8"/>
      <rect x="7.5" y="54.5" width="8" height="8"/>
      <rect x="7.5" y="70.5" width="8" height="8"/>
    </g>
    <g fill="#000">
      <rect x="9" y="10" width="5" height="1"/>
      <rect x="9" y="58" width="5" height="1"/>
      <rect x="11" y="56" width="1" height="5"/>
      <rect x="9" y="74" width="5" height="1"/>
      <rect x="11" y="72" width="1" height="5"/>
    </g>
    <rect x="40" y="18" width="121" height="16" fill="#0078d7"/>
    <rect x="40.5" y="18.5" width="120" height="15" fill="none" stroke="#1a1a1a"/>
    <rect x="40.5" y="18.5" width="120" height="15" fill="none" stroke="#ff8c1a" stroke-dasharray="1 1" shape-rendering="crispEdges"/>
  </svg>
  <div class="tt" style="left:24px;top:4px;transform:scaleX(0.904)">3D Scene</div>
  <div class="tt" style="left:42px;top:20px;color:#fff;transform:scaleX(0.92)">1.</div>
  <div class="tt" style="left:60.5px;top:20px;color:#fff;transform:scaleX(0.918)">PHW_01_Sho_0002</div>
  <div class="tt" style="left:42px;top:36px;transform:scaleX(0.92)">2.</div>
  <div class="tt" style="left:60.5px;top:36px;transform:scaleX(0.915)">PHW_01_Sho_0002_dec</div>
  <div class="tt" style="left:23px;top:52px;transform:scaleX(0.87)">Materials</div>
  <div class="tt" style="left:23px;top:68px;transform:scaleX(0.9)">Bones</div>

</div>
<div id="sb" class="a">
  <div class="sp" style="left:0;width:380px"></div>
  <div class="sp" style="left:382px;width:418px"></div>
  <div class="sp" style="left:802px;width:288px"></div>
  <div class="sp" style="left:1092px;width:827px"></div>
  <div class="t" style="left:2px;top:5px;transform:scaleX(0.955);transform-origin:0 0">Ready</div>
  <div class="t" style="left:419px;top:5px">Objects: 2</div>
  <div class="t" style="left:481px;top:5px;transform:scaleX(0.947);transform-origin:0 0">Vertices: 1459</div>
  <div class="t" style="left:561px;top:5px;transform:scaleX(0.98);transform-origin:0 0">Polygons: 2214</div>
  <div class="t" style="left:649px;top:5px">Materials: 2</div>
  <div class="t" style="left:718px;top:5px;transform:scaleX(0.947);transform-origin:0 0">Bones: 1</div>
  <div class="a" style="left:0;top:17px;width:1920px;height:2px;background:#1c1c1c"></div>
</div>
</body></html>
